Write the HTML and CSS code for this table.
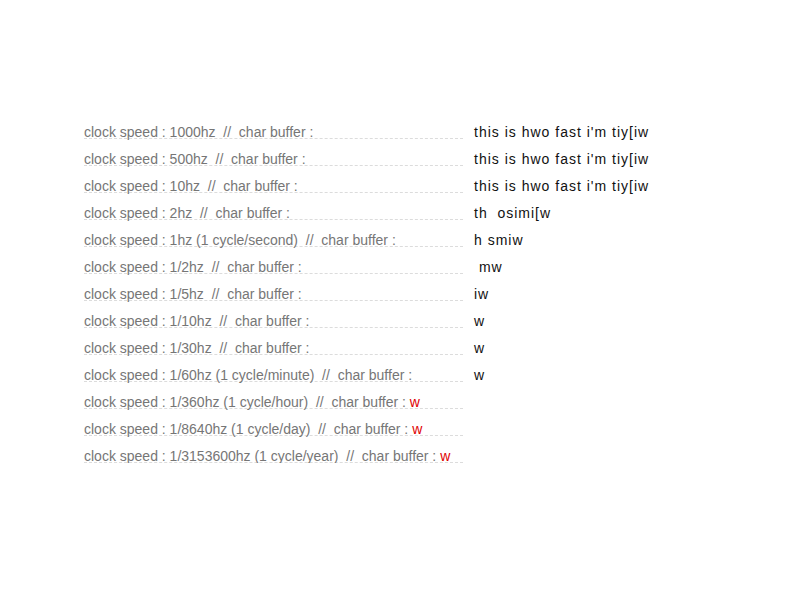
FILE: index.html
```html
<!DOCTYPE html>
<html>
<head>
<meta charset="utf-8">
<link rel="stylesheet" href="styles.css">
</head>
<body>
<div class="list">
  <div class="row"><div class="label">clock speed : 1000hz  //  char buffer : </div><div class="buf">this is hwo fast i'm tiy[iw</div></div>
  <div class="row"><div class="label">clock speed : 500hz  //  char buffer : </div><div class="buf">this is hwo fast i'm tiy[iw</div></div>
  <div class="row"><div class="label">clock speed : 10hz  //  char buffer : </div><div class="buf">this is hwo fast i'm tiy[iw</div></div>
  <div class="row"><div class="label">clock speed : 2hz  //  char buffer : </div><div class="buf">th  osimi[w</div></div>
  <div class="row"><div class="label">clock speed : 1hz (1 cycle/second)  //  char buffer : </div><div class="buf">h smiw</div></div>
  <div class="row"><div class="label">clock speed : 1/2hz  //  char buffer : </div><div class="buf"> mw</div></div>
  <div class="row"><div class="label">clock speed : 1/5hz  //  char buffer : </div><div class="buf">iw</div></div>
  <div class="row"><div class="label">clock speed : 1/10hz  //  char buffer : </div><div class="buf">w</div></div>
  <div class="row"><div class="label">clock speed : 1/30hz  //  char buffer : </div><div class="buf">w</div></div>
  <div class="row"><div class="label">clock speed : 1/60hz (1 cycle/minute)  //  char buffer : </div><div class="buf">w</div></div>
  <div class="row"><div class="label">clock speed : 1/360hz (1 cycle/hour)  //  char buffer : <span class="red">w</span></div><div class="buf"></div></div>
  <div class="row"><div class="label">clock speed : 1/8640hz (1 cycle/day)  //  char buffer : <span class="red">w</span></div><div class="buf"></div></div>
  <div class="row"><div class="label">clock speed : 1/3153600hz (1 cycle/year)  //  char buffer : <span class="red">w</span></div><div class="buf"></div></div>
</div>
</body>
</html>
```
FILE: styles.css
```css
html, body {
  margin: 0;
  background: #fff;
}
body {
  font-family: "Liberation Sans", Arial, sans-serif;
  font-size: 14px;
}
.list {
  padding: 124px 0 0 84px;
  display: flex;
  flex-direction: column;
  gap: 12px;
}
.row {
  display: flex;
  align-items: flex-start;
  gap: 11px;
}
.label {
  width: 379px;
  padding-top: 2px;
  line-height: 12px;
  color: #767676;
  border-bottom: 1px dashed #dcdcdc;
  white-space: pre;
}
.red {
  color: #e00000;
}
.buf {
  padding-top: 2px;
  line-height: 12px;
  color: #111;
  letter-spacing: 1px;
  white-space: pre;
}
```
